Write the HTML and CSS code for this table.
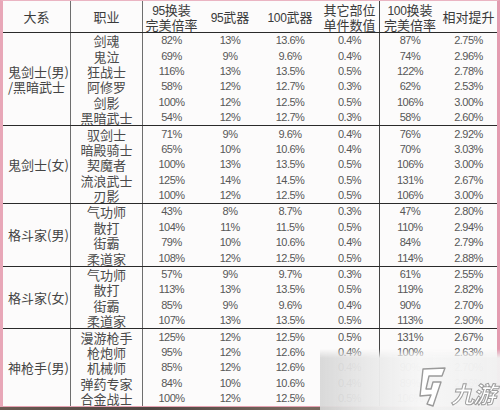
FILE: index.html
```html
<!DOCTYPE html>
<html lang="zh-CN">
<head>
<meta charset="utf-8">
<title>换装倍率表</title>
<link rel="stylesheet" href="styles.css">
</head>
<body>
<div class="frame">
  <div class="sheet">
    <div class="head">
      <div class="hc c1">大系</div>
      <div class="hc c2">职业</div>
      <div class="hc"><span><span class="n">95</span>换装</span><span>完美倍率</span></div>
      <div class="hc"><span><span class="n">95</span>武器</span></div>
      <div class="hc"><span><span class="n">100</span>武器</span></div>
      <div class="hc c6"><span>其它部位</span><span>单件数值</span></div>
      <div class="hc"><span><span class="n">100</span>换装</span><span>完美倍率</span></div>
      <div class="hc"><span>相对提升</span></div>
    </div>

    <div class="group">
      <div class="glabel"><span>鬼剑士(男)</span><span>/黑暗武士</span></div>
      <div class="rows">
        <div class="row"><span class="job">剑魂</span><span>82%</span><span>13%</span><span>13.6%</span><span class="oth">0.4%</span><span>87%</span><span>2.75%</span></div>
        <div class="row"><span class="job">鬼泣</span><span>69%</span><span>9%</span><span>9.6%</span><span class="oth">0.4%</span><span>74%</span><span>2.96%</span></div>
        <div class="row"><span class="job">狂战士</span><span>116%</span><span>13%</span><span>13.5%</span><span class="oth">0.5%</span><span>122%</span><span>2.78%</span></div>
        <div class="row"><span class="job">阿修罗</span><span>58%</span><span>12%</span><span>12.7%</span><span class="oth">0.3%</span><span>62%</span><span>2.53%</span></div>
        <div class="row"><span class="job">剑影</span><span>100%</span><span>12%</span><span>12.5%</span><span class="oth">0.5%</span><span>106%</span><span>3.00%</span></div>
        <div class="row"><span class="job">黑暗武士</span><span>54%</span><span>12%</span><span>12.7%</span><span class="oth">0.3%</span><span>58%</span><span>2.60%</span></div>
      </div>
    </div>

    <div class="group">
      <div class="glabel"><span>鬼剑士(女)</span></div>
      <div class="rows">
        <div class="row"><span class="job">驭剑士</span><span>71%</span><span>9%</span><span>9.6%</span><span class="oth">0.4%</span><span>76%</span><span>2.92%</span></div>
        <div class="row"><span class="job">暗殿骑士</span><span>65%</span><span>10%</span><span>10.6%</span><span class="oth">0.4%</span><span>70%</span><span>3.03%</span></div>
        <div class="row"><span class="job">契魔者</span><span>100%</span><span>13%</span><span>13.5%</span><span class="oth">0.5%</span><span>106%</span><span>3.00%</span></div>
        <div class="row"><span class="job">流浪武士</span><span>125%</span><span>14%</span><span>14.5%</span><span class="oth">0.5%</span><span>131%</span><span>2.67%</span></div>
        <div class="row"><span class="job">刃影</span><span>100%</span><span>12%</span><span>12.5%</span><span class="oth">0.5%</span><span>106%</span><span>3.00%</span></div>
      </div>
    </div>

    <div class="group">
      <div class="glabel"><span>格斗家(男)</span></div>
      <div class="rows">
        <div class="row"><span class="job">气功师</span><span>43%</span><span>8%</span><span>8.7%</span><span class="oth">0.3%</span><span>47%</span><span>2.80%</span></div>
        <div class="row"><span class="job">散打</span><span>104%</span><span>11%</span><span>11.5%</span><span class="oth">0.5%</span><span>110%</span><span>2.94%</span></div>
        <div class="row"><span class="job">街霸</span><span>79%</span><span>10%</span><span>10.6%</span><span class="oth">0.4%</span><span>84%</span><span>2.79%</span></div>
        <div class="row"><span class="job">柔道家</span><span>108%</span><span>12%</span><span>12.5%</span><span class="oth">0.5%</span><span>114%</span><span>2.88%</span></div>
      </div>
    </div>

    <div class="group">
      <div class="glabel"><span>格斗家(女)</span></div>
      <div class="rows">
        <div class="row"><span class="job">气功师</span><span>57%</span><span>9%</span><span>9.7%</span><span class="oth">0.3%</span><span>61%</span><span>2.55%</span></div>
        <div class="row"><span class="job">散打</span><span>113%</span><span>13%</span><span>13.5%</span><span class="oth">0.5%</span><span>119%</span><span>2.82%</span></div>
        <div class="row"><span class="job">街霸</span><span>85%</span><span>9%</span><span>9.6%</span><span class="oth">0.4%</span><span>90%</span><span>2.70%</span></div>
        <div class="row"><span class="job">柔道家</span><span>107%</span><span>13%</span><span>13.5%</span><span class="oth">0.5%</span><span>113%</span><span>2.90%</span></div>
      </div>
    </div>

    <div class="group last">
      <div class="glabel"><span>神枪手(男)</span></div>
      <div class="rows">
        <div class="row"><span class="job">漫游枪手</span><span>125%</span><span>12%</span><span>12.5%</span><span class="oth">0.5%</span><span>131%</span><span>2.67%</span></div>
        <div class="row"><span class="job">枪炮师</span><span>95%</span><span>12%</span><span>12.6%</span><span class="oth">0.4%</span><span>100%</span><span>2.63%</span></div>
        <div class="row"><span class="job">机械师</span><span>85%</span><span>12%</span><span>12.6%</span><span class="oth">0.4%</span><span>90%</span><span>2.70%</span></div>
        <div class="row"><span class="job">弹药专家</span><span>84%</span><span>10%</span><span>10.6%</span><span class="oth">0.4%</span><span>89%</span><span>2.86%</span></div>
        <div class="row"><span class="job">合金战士</span><span>100%</span><span>12%</span><span>12.5%</span><span class="oth">0.5%</span><span>106%</span><span>3.00%</span></div>
      </div>
    </div>
  </div>

  <div class="mark">
    <svg class="mark-icon" width="30" height="42" viewBox="0 0 30 42">
      <path d="M6 3 L28 2 L25 10 L12 10 L9 23 L14 23 L16 16 L24 16 L16 40 L10 38 L14 29 L3 30 Z" fill="#ffffff" stroke="#9a9a9a" stroke-width="1.4" stroke-linejoin="round"/>
    </svg>
    <span class="mark-text">九游</span>
  </div>
</div>
<div class="strip"></div>
</body>
</html>
```

FILE: styles.css
```css
html, body {
  margin: 0;
  padding: 0;
}

body {
  width: 500px;
  height: 410px;
  overflow: hidden;
  background: #fbfafa;
  font-family: "Noto Sans CJK SC", "Liberation Sans", sans-serif;
  font-size: 13px;
  color: #555;
}

.frame {
  position: relative;
  width: 500px;
  box-sizing: border-box;
  border-left: 3px solid #e8a7b8;
  border-right: 3px solid #e49bb0;
  border-top: 1px solid #eab4c2;
  border-bottom: 1px solid #e6a2b2;
  background: #fcfbfb;
}

.sheet {
  width: 494px;
}

.head {
  display: grid;
  grid-template-columns: 68px 72px 57px 60px 60px 60px 60px 57px;
  height: 32px;
  box-sizing: border-box;
  border-bottom: 1px solid #2a2a2a;
}

.hc {
  display: flex;
  flex-direction: column;
  align-items: center;
  justify-content: center;
  line-height: 15px;
  color: #3a3a3a;
  box-sizing: border-box;
  white-space: nowrap;
}

.hc > span {
  display: block;
  height: 15px;
  line-height: 15px;
}

.hc.c1, .hc.c2 {
  border-right: 1px solid #6e6e6e;
}

.hc.c6 {
  border-right: 1px solid #444;
}

.n {
  font-family: "Liberation Sans", sans-serif;
  font-size: 12px;
  letter-spacing: -0.4px;
  line-height: 15px;
}

.group {
  display: flex;
  border-bottom: 1px solid #2a2a2a;
}

.group.last {
  border-bottom: none;
}

.glabel {
  width: 68px;
  flex: none;
  box-sizing: border-box;
  border-right: 1px solid #6e6e6e;
  display: flex;
  flex-direction: column;
  justify-content: center;
  padding-left: 5px;
  color: #444;
  white-space: nowrap;
}

.glabel > span {
  display: block;
  height: 15.5px;
  line-height: 15.5px;
}

.rows {
  flex: 1;
}

.row {
  display: grid;
  grid-template-columns: 72px 57px 60px 60px 60px 60px 57px;
  height: 15.4px;
}

.row > span {
  display: flex;
  align-items: center;
  justify-content: center;
  box-sizing: border-box;
  height: 15.4px;
  line-height: 1;
  font-family: "Liberation Sans", sans-serif;
  font-size: 11px;
  letter-spacing: -0.5px;
  color: #575757;
  white-space: nowrap;
}

.row > span.job {
  font-family: "Noto Sans CJK SC", sans-serif;
  font-size: 13px;
  letter-spacing: 0;
  color: #4a4a4a;
  border-right: 1px solid #6e6e6e;
}

.row > span.oth {
  border-right: 1px solid #444;
}

.mark {
  position: absolute;
  left: 317px;
  top: 348px;
  width: 180px;
  height: 63px;
  display: flex;
  align-items: flex-end;
  justify-content: flex-end;
  gap: 4px;
  padding: 0 5px 5px 0;
  box-sizing: border-box;
  background: linear-gradient(90deg, rgba(214, 214, 214, 0.92) 0%, rgba(232, 232, 232, 0.96) 25%, rgba(246, 246, 246, 0.98) 55%, rgba(240, 240, 240, 0.97) 100%);
  -webkit-mask-image: linear-gradient(to bottom, transparent 0, #000 9px);
  mask-image: linear-gradient(to bottom, transparent 0, #000 9px);
}

.mark-icon {
  display: block;
  margin-bottom: -1px;
}

.mark-text {
  font-family: "Noto Sans CJK SC", sans-serif;
  font-size: 23px;
  font-weight: 700;
  font-style: italic;
  line-height: 28px;
  color: #ffffff;
  -webkit-text-stroke: 1px #9c9c9c;
  letter-spacing: -1px;
}

.strip {
  height: 3px;
  background: linear-gradient(90deg, #6a5a52, #4e4541 30%, #7a6a60 60%, #5b504b);
}
```
